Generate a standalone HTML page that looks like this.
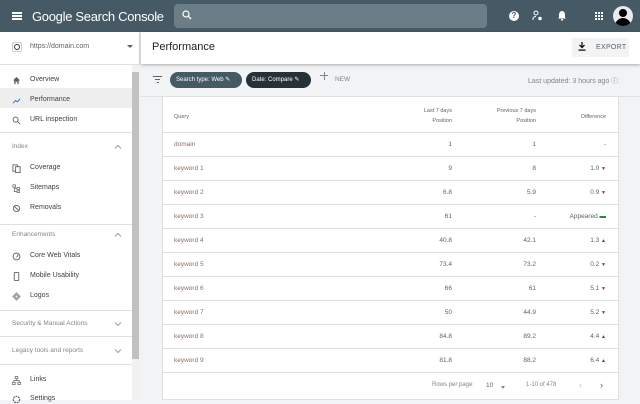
<!DOCTYPE html>
<html><head><style>
*{margin:0;padding:0;box-sizing:border-box}
body{width:640px;height:400px;overflow:hidden;font-family:"Liberation Sans",sans-serif;background:#f1f3f4;position:relative;color:#202124}
.top{position:absolute;left:0;top:0;width:640px;height:32px;background:#455a64}
.abs{position:absolute}
.side{position:absolute;left:0;top:32px;width:140px;height:368px;background:#fff;border-right:1px solid #e0e0e0}
.si{position:absolute;left:30px;font-size:7px;color:#3c4043}
.ic{position:absolute;left:12px;width:9px;height:9px}
.sh{position:absolute;left:12px;font-size:6.5px;color:#80868b}
.hr{position:absolute;left:0;width:132px;height:1px;background:#e0e0e0}
.chev{position:absolute;left:114px;width:8px;height:5px}
.card{position:absolute;left:162px;top:97px;width:457px;height:303px;background:#fff;border:1px solid #e0e0e0;border-top:none}
.row{position:absolute;left:0;width:455px;height:24px;border-top:1px solid #e0e0e0;font-size:6.5px;color:#5f6368}
.row span{position:absolute;top:8px}
.q{left:11px;color:#8d6e63}
.c1{right:166px;text-align:right}
.c2{right:82px}
.c3{right:12px}
.dn{color:#b71c1c;font-size:5px}
.up{color:#1b5e20;font-size:5px}
</style></head><body>
<div class="top">
 <div class="abs" style="left:12px;top:12px;width:10px;height:1.5px;background:#fff;box-shadow:0 3px 0 #fff,0 6px 0 #fff"></div>
 <div class="abs" style="left:32px;top:9px;font-size:13px;color:#fff;letter-spacing:-0.3px">Google Search Console</div>
 <div class="abs" style="left:174px;top:4px;width:313px;height:24px;background:#6b7e87;border-radius:4px"></div>
 <svg class="abs" style="left:182px;top:10px" width="10" height="10" viewBox="0 0 10 10"><circle cx="4" cy="4" r="3" fill="none" stroke="#fff" stroke-width="1.2"/><path d="M6.2 6.2L9 9" stroke="#fff" stroke-width="1.3"/></svg>
 <div class="abs" style="left:509px;top:11px;width:10px;height:10px;border-radius:50%;background:#fff;color:#455a64;font-size:8px;font-weight:bold;text-align:center;line-height:10px">?</div>
 <svg class="abs" style="left:532px;top:10px" width="11" height="11" viewBox="0 0 11 11"><circle cx="4" cy="3" r="2" fill="none" stroke="#fff"/><path d="M1 10V8.5C1 7 3 6.5 4 6.5" fill="none" stroke="#fff"/><circle cx="8" cy="8.5" r="1.8" fill="#fff"/></svg>
 <svg class="abs" style="left:557px;top:10px" width="10" height="11" viewBox="0 0 10 11"><path d="M5 1C3 1 2 3 2 5V7.5L1 8.5H9L8 7.5V5C8 3 7 1 5 1Z" fill="#fff"/><rect x="4" y="9" width="2" height="1.5" fill="#fff"/></svg>
 <svg class="abs" style="left:595px;top:12px" width="8" height="8" viewBox="0 0 8 8" fill="#fff"><rect x="0" y="0" width="2" height="2"/><rect x="3" y="0" width="2" height="2"/><rect x="6" y="0" width="2" height="2"/><rect x="0" y="3" width="2" height="2"/><rect x="3" y="3" width="2" height="2"/><rect x="6" y="3" width="2" height="2"/><rect x="0" y="6" width="2" height="2"/><rect x="3" y="6" width="2" height="2"/><rect x="6" y="6" width="2" height="2"/></svg>
 <div class="abs" style="left:613px;top:6px;width:20px;height:20px;border-radius:50%;background:#e8eaed;overflow:hidden"><div class="abs" style="left:6px;top:3px;width:8px;height:8px;border-radius:50%;background:#000"></div><div class="abs" style="left:2px;top:12px;width:16px;height:10px;border-radius:8px 8px 0 0;background:#000"></div></div>
</div>

<div class="side">
 <div class="abs" style="left:12px;top:10px;width:10px;height:10px;border:1px solid #ccc;border-radius:2px"><div class="abs" style="left:1px;top:1px;width:6px;height:6px;border-radius:50%;border:1.2px solid #333"></div></div>
 <div class="abs" style="left:30px;top:11px;font-size:7px;color:#5f6368">https://domain.com</div>
 <div class="abs" style="left:127px;top:13px;border:3px solid transparent;border-top:3px solid #5f6368"></div>
 <div class="hr" style="top:32px;width:140px"></div>
 <div class="abs" style="left:132px;top:33px;width:8px;height:335px;background:#f1f1f1"></div>
 <div class="abs" style="left:132px;top:40px;width:7px;height:287px;background:#c1c1c1"></div>
 <div class="abs" style="left:0;top:56px;width:132px;height:20px;background:#eeeeee"></div>
 <svg class="ic" style="top:44px" viewBox="0 0 10 10"><path d="M5 1L1 5H2.5V9H4V6.5H6V9H7.5V5H9Z" fill="#5f6368"/></svg>
 <div class="si" style="top:44px">Overview</div>
 <svg class="ic" style="top:64px" viewBox="0 0 10 10"><path d="M1 8L4 5L6 6.5L9 3" fill="none" stroke="#1a73e8" stroke-width="1"/></svg>
 <div class="si" style="top:64px">Performance</div>
 <svg class="ic" style="top:84px" viewBox="0 0 10 10"><circle cx="4" cy="4" r="2.8" fill="none" stroke="#5f6368"/><path d="M6 6L9 9" stroke="#5f6368"/></svg>
 <div class="si" style="top:84px">URL inspection</div>
 <div class="hr" style="top:100px"></div>
 <div class="sh" style="top:111px">Index</div><svg class="chev" style="top:112px" viewBox="0 0 8 5"><path d="M1 4.5L4 1.5L7 4.5" fill="none" stroke="#80868b" stroke-width=".8"/></svg>
 <svg class="ic" style="top:132px" viewBox="0 0 10 10"><rect x="1" y="1" width="5" height="7" fill="none" stroke="#5f6368"/><rect x="4" y="3" width="5" height="6.5" fill="#fff" stroke="#5f6368"/></svg>
 <div class="si" style="top:132px">Coverage</div>
 <svg class="ic" style="top:152px" viewBox="0 0 10 10"><rect x="1" y="1" width="3" height="2.5" fill="none" stroke="#5f6368" stroke-width=".8"/><rect x="5.5" y="4" width="3" height="2" fill="none" stroke="#5f6368" stroke-width=".8"/><rect x="5.5" y="7.5" width="3" height="2" fill="none" stroke="#5f6368" stroke-width=".8"/><path d="M2.5 3.5V8.5H5.5M2.5 5H5.5" fill="none" stroke="#5f6368" stroke-width=".8"/></svg>
 <div class="si" style="top:152px">Sitemaps</div>
 <svg class="ic" style="top:172px" viewBox="0 0 10 10"><circle cx="5" cy="5" r="3.5" fill="none" stroke="#5f6368"/><path d="M2 2L8 8" stroke="#5f6368"/></svg>
 <div class="si" style="top:172px">Removals</div>
 <div class="hr" style="top:192px"></div>
 <div class="sh" style="top:199px">Enhancements</div><svg class="chev" style="top:200px" viewBox="0 0 8 5"><path d="M1 4.5L4 1.5L7 4.5" fill="none" stroke="#80868b" stroke-width=".8"/></svg>
 <svg class="ic" style="top:220px" viewBox="0 0 10 10"><circle cx="5" cy="5" r="3.8" fill="none" stroke="#5f6368"/><path d="M5 6L7 3" stroke="#5f6368"/></svg>
 <div class="si" style="top:220px">Core Web Vitals</div>
 <svg class="ic" style="top:240px" viewBox="0 0 10 10"><rect x="2.5" y="0.5" width="5" height="9" rx="0.8" fill="none" stroke="#5f6368"/></svg>
 <div class="si" style="top:240px">Mobile Usability</div>
 <svg class="ic" style="top:260px" viewBox="0 0 10 10"><path d="M5 1L9 5L5 9L1 5Z M3 5L5 3L7 5L5 7Z" fill="none" stroke="#5f6368" stroke-width=".8"/></svg>
 <div class="si" style="top:260px">Logos</div>
 <div class="hr" style="top:278px"></div>
 <div class="sh" style="top:288px">Security &amp; Manual Actions</div><svg class="chev" style="top:290px" viewBox="0 0 8 5"><path d="M1 0.5L4 3.5L7 0.5" fill="none" stroke="#80868b" stroke-width=".8"/></svg>
 <div class="hr" style="top:304px"></div>
 <div class="sh" style="top:315px">Legacy tools and reports</div><svg class="chev" style="top:317px" viewBox="0 0 8 5"><path d="M1 0.5L4 3.5L7 0.5" fill="none" stroke="#80868b" stroke-width=".8"/></svg>
 <div class="hr" style="top:332px"></div>
 <svg class="ic" style="top:344px" viewBox="0 0 10 10"><rect x="3.5" y="0.5" width="3" height="2.5" fill="none" stroke="#5f6368" stroke-width=".8"/><rect x="0.5" y="7" width="3" height="2.5" fill="none" stroke="#5f6368" stroke-width=".8"/><rect x="6.5" y="7" width="3" height="2.5" fill="none" stroke="#5f6368" stroke-width=".8"/><path d="M5 3V5M2 7V5H8V7" fill="none" stroke="#5f6368" stroke-width=".8"/></svg>
 <div class="si" style="top:344px">Links</div>
 <svg class="ic" style="top:363px" viewBox="0 0 10 10"><circle cx="5" cy="5" r="3.5" fill="none" stroke="#5f6368" stroke-width="1.4" stroke-dasharray="2 1"/></svg>
 <div class="si" style="top:363px">Settings</div>
</div>

<div class="abs" style="left:141px;top:32px;width:499px;height:32px;background:#fff;box-shadow:0 1px 3px rgba(0,0,0,.3)">
 <div class="abs" style="left:11px;top:9px;font-size:11px;color:#202124">Performance</div>
 <div class="abs" style="left:431px;top:6px;width:57px;height:19px;background:#f1f3f4;border-radius:2px"></div>
 <svg class="abs" style="left:437px;top:10px" width="8" height="9" viewBox="0 0 8 9"><path d="M4 0V5M1.5 3L4 5.5L6.5 3" fill="none" stroke="#000" stroke-width="1.2"/><rect x="0.5" y="7.5" width="7" height="1.2" fill="#000"/></svg>
 <div class="abs" style="left:455px;top:12px;font-size:7px;color:#5f6368;letter-spacing:.3px">EXPORT</div>
</div>

<div class="abs" style="left:153px;top:76px;width:9px;height:1.2px;background:#5f6368"></div>
<div class="abs" style="left:155px;top:79px;width:5px;height:1.2px;background:#5f6368"></div>
<div class="abs" style="left:157px;top:82px;width:1.5px;height:1.2px;background:#5f6368"></div>
<div class="abs" style="left:170px;top:72px;width:72px;height:16px;border-radius:8px;background:#455a64;color:#fff;font-size:6px;padding:4px 0 0 6px">Search type: Web ✎</div>
<div class="abs" style="left:246px;top:72px;width:65px;height:16px;border-radius:8px;background:#263238;color:#fff;font-size:6px;padding:4px 0 0 6px">Date: Compare ✎</div>
<div class="abs" style="left:320px;top:75px;width:8px;height:1px;background:#80868b"></div>
<div class="abs" style="left:323.5px;top:71.5px;width:1px;height:8px;background:#80868b"></div>
<div class="abs" style="left:335px;top:76px;font-size:6.5px;color:#80868b">NEW</div>
<div class="abs" style="left:528px;top:76px;font-size:7px;color:#80868b">Last updated: 3 hours ago ⓘ</div>
<div class="abs" style="left:141px;top:96px;width:499px;height:1px;background:#e0e0e0"></div>

<div class="card">
 <div class="abs" style="left:11px;top:17px;font-size:5.5px;color:#5f6368">Query</div>
 <div class="abs" style="right:166px;top:9px;font-size:5.5px;color:#5f6368;text-align:right;line-height:10px">Last 7 days<br>Position</div>
 <div class="abs" style="right:82px;top:9px;font-size:5.5px;color:#5f6368;text-align:right;line-height:10px">Previous 7 days<br>Position</div>
 <div class="abs" style="right:12px;top:17px;font-size:5.5px;color:#5f6368">Difference</div>
 <div class="row" style="top:35px"><span class="q">domain</span><span class="c1">1</span><span class="c2">1</span><span class="c3">-</span></div>
 <div class="row" style="top:59px"><span class="q">keyword 1</span><span class="c1">9</span><span class="c2">8</span><span class="c3">1.0 <b class="dn">▼</b></span></div>
 <div class="row" style="top:83px"><span class="q">keyword 2</span><span class="c1">6.8</span><span class="c2">5.9</span><span class="c3">0.9 <b class="dn">▼</b></span></div>
 <div class="row" style="top:107px"><span class="q">keyword 3</span><span class="c1">61</span><span class="c2">-</span><span class="c3">Appeared <b style="color:#1b8e3e">▬</b></span></div>
 <div class="row" style="top:131px"><span class="q">keyword 4</span><span class="c1">40.8</span><span class="c2">42.1</span><span class="c3">1.3 <b class="up">▲</b></span></div>
 <div class="row" style="top:155px"><span class="q">keyword 5</span><span class="c1">73.4</span><span class="c2">73.2</span><span class="c3">0.2 <b class="dn">▼</b></span></div>
 <div class="row" style="top:179px"><span class="q">keyword 6</span><span class="c1">66</span><span class="c2">61</span><span class="c3">5.1 <b class="dn">▼</b></span></div>
 <div class="row" style="top:203px"><span class="q">keyword 7</span><span class="c1">50</span><span class="c2">44.9</span><span class="c3">5.2 <b class="dn">▼</b></span></div>
 <div class="row" style="top:227px"><span class="q">keyword 8</span><span class="c1">84.8</span><span class="c2">89.2</span><span class="c3">4.4 <b class="up">▲</b></span></div>
 <div class="row" style="top:251px"><span class="q">keyword 9</span><span class="c1">81.8</span><span class="c2">88.2</span><span class="c3">6.4 <b class="up">▲</b></span></div>
 <div class="row" style="top:275px;height:28px"></div>
 <div class="abs" style="left:269px;top:285px;font-size:6px;color:#80868b">Rows per page:</div>
 <div class="abs" style="left:323px;top:285px;font-size:6.5px;color:#5f6368">10</div>
 <div class="abs" style="left:338px;top:289px;border:2.5px solid transparent;border-top:3px solid #80868b"></div>
 <div class="abs" style="left:363px;top:285px;font-size:6px;color:#80868b">1-10 of 478</div>
 <div class="abs" style="left:416px;top:283px;font-size:9px;color:#bdbdbd">‹</div>
 <div class="abs" style="left:437px;top:283px;font-size:9px;color:#5f6368">›</div>
</div>
</body></html>
